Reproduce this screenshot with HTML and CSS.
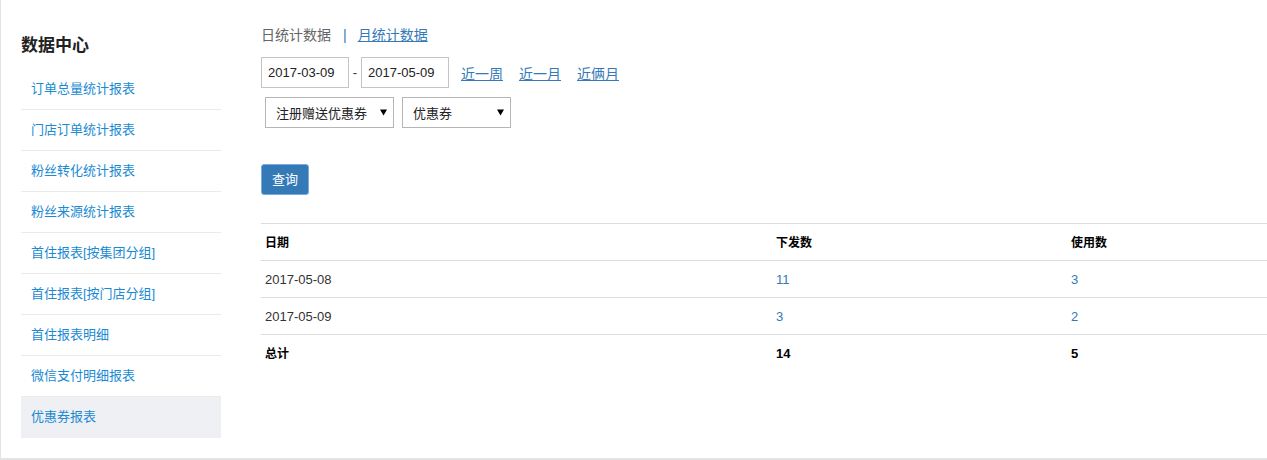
FILE: index.html
```html
<!DOCTYPE html>
<html lang="zh-CN">
<head>
<meta charset="utf-8">
<title>数据中心</title>
<link rel="stylesheet" href="styles.css">
</head>
<body>
<div class="page">
  <aside class="sidebar">
    <h2 class="side-title">数据中心</h2>
    <ul class="side-menu">
      <li><a href="#">订单总量统计报表</a></li>
      <li><a href="#">门店订单统计报表</a></li>
      <li><a href="#">粉丝转化统计报表</a></li>
      <li><a href="#">粉丝来源统计报表</a></li>
      <li><a href="#">首住报表[按集团分组]</a></li>
      <li><a href="#">首住报表[按门店分组]</a></li>
      <li><a href="#">首住报表明细</a></li>
      <li><a href="#">微信支付明细报表</a></li>
      <li class="active"><a href="#">优惠券报表</a></li>
    </ul>
  </aside>
  <main class="main">
    <div class="tabs">
      <span class="tab-current">日统计数据</span>
      <span class="tab-sep">|</span>
      <a href="#" class="tab-link">月统计数据</a>
    </div>
    <div class="date-row">
      <input class="date-input" type="text" value="2017-03-09">
      <span class="dash">-</span>
      <input class="date-input" type="text" value="2017-05-09">
      <a href="#" class="quick-link first">近一周</a>
      <a href="#" class="quick-link">近一月</a>
      <a href="#" class="quick-link">近俩月</a>
    </div>
    <div class="select-row">
      <div class="fake-select sel-type">
        <span>注册赠送优惠券</span>
        <svg class="caret" width="7" height="7" viewBox="0 0 7 7"><path d="M0 0.5H7L3.5 6.5Z" fill="#000"/></svg>
      </div>
      <div class="fake-select sel-coupon">
        <span>优惠券</span>
        <svg class="caret" width="7" height="7" viewBox="0 0 7 7"><path d="M0 0.5H7L3.5 6.5Z" fill="#000"/></svg>
      </div>
    </div>
    <button class="btn-query" type="button">查询</button>
    <table class="data-table">
      <colgroup>
        <col class="c1">
        <col class="c2">
        <col class="c3">
      </colgroup>
      <thead>
        <tr><th>日期</th><th>下发数</th><th>使用数</th></tr>
      </thead>
      <tbody>
        <tr><td>2017-05-08</td><td><a href="#" class="num">11</a></td><td><a href="#" class="num">3</a></td></tr>
        <tr><td>2017-05-09</td><td><a href="#" class="num">3</a></td><td><a href="#" class="num">2</a></td></tr>
        <tr class="total"><td>总计</td><td>14</td><td>5</td></tr>
      </tbody>
    </table>
  </main>
</div>
</body>
</html>
```

FILE: styles.css
```css
* { box-sizing: border-box; }

html, body {
  margin: 0;
  padding: 0;
  background: #fff;
}

body {
  font-family: "Liberation Sans", "Noto Sans CJK SC", sans-serif;
  font-size: 13px;
  color: #333;
}

a { text-decoration: none; }

.page {
  display: flex;
  gap: 40px;
  height: 460px;
  border-left: 1px solid #e4e4e4;
  border-bottom: 2px solid #e4e4e4;
}

/* Sidebar */
.sidebar {
  width: 220px;
  padding-left: 20px;
  flex-shrink: 0;
}

.side-title {
  margin: 34px 0 0;
  font-size: 17px;
  line-height: 24px;
  font-weight: bold;
  color: #222;
}

.side-menu {
  list-style: none;
  margin: 11px 0 0;
  padding: 0;
}

.side-menu li {
  height: 41px;
  border-bottom: 1px solid #ebebeb;
}

.side-menu li:last-child { border-bottom: none; }

.side-menu li a {
  display: block;
  padding-left: 10px;
  line-height: 40px;
  font-size: 13px;
  color: #1a8ad4;
}

.side-menu li.active {
  background: #eff0f3;
  border-bottom: none;
}

/* Main */
.main {
  flex: 1;
  padding-top: 25px;
  min-width: 0;
}

.tabs {
  height: 20px;
  line-height: 20px;
  font-size: 14px;
  display: flex;
  align-items: center;
}

.tab-current { color: #666; }

.tab-sep {
  color: #337ab7;
  margin: 0 11px 0 12px;
}

.tab-link {
  color: #337ab7;
  text-decoration: underline;
}

.date-row {
  margin-top: 12px;
  display: flex;
  align-items: center;
  height: 31px;
}

.date-input {
  width: 88px;
  height: 31px;
  border: 1px solid #c4c4c4;
  padding: 0 0 0 6px;
  font-family: "Liberation Sans", sans-serif;
  font-size: 13px;
  color: #222;
  background: #fff;
  outline: none;
}

.dash {
  width: 12px;
  text-align: center;
  color: #333;
}

.quick-link {
  color: #337ab7;
  text-decoration: underline;
  margin-left: 16px;
  font-size: 14px;
}

.quick-link.first { margin-left: 12px; }

.select-row {
  margin-top: 9px;
  padding-left: 4px;
  display: flex;
  gap: 8px;
}

.fake-select {
  height: 31px;
  border: 1px solid #b5b5b5;
  background: #fff;
  display: flex;
  align-items: center;
  justify-content: space-between;
  padding: 0 6px 0 10px;
  font-size: 13px;
  color: #222;
}

.sel-type { width: 129px; }
.sel-coupon { width: 109px; }

.caret { display: block; }

.btn-query {
  display: block;
  margin-top: 36px;
  height: 31px;
  padding: 0 10px;
  border: 1px solid #7aa8e0;
  border-radius: 3px;
  background: #337ab7;
  color: #fff;
  font-family: "Liberation Sans", "Noto Sans CJK SC", sans-serif;
  font-size: 13px;
  line-height: 29px;
}

.data-table {
  margin-top: 28px;
  width: 1006px;
  border-collapse: collapse;
  table-layout: fixed;
}

.c1 { width: 511px; }
.c2 { width: 295px; }
.c3 { width: 200px; }

.data-table th,
.data-table td {
  text-align: left;
  padding: 9px 4px 7px;
  height: 37px;
  line-height: 20px;
  border-top: 1px solid #ddd;
}

.data-table th {
  font-size: 12px;
  font-weight: bold;
  color: #000;
}

.data-table td {
  font-size: 13px;
  color: #333;
}

.data-table .num { color: #337ab7; }

.data-table tr.total td {
  font-weight: bold;
  color: #000;
}

.data-table tr.total td:first-child { font-size: 12px; }
```
